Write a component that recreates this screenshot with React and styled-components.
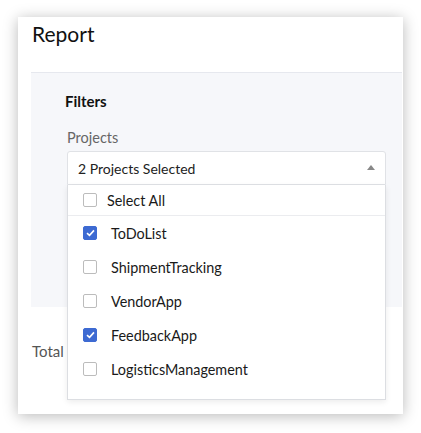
import React from "react";
import styled, { createGlobalStyle } from "styled-components";

const GlobalStyle = createGlobalStyle`
  body {
    margin: 0;
    background: #ffffff;
    font-family: "Lato", "Liberation Sans", sans-serif;
  }
`;

const Page = styled.div`
  padding: 17px 0 0 18px;
  width: 421px;
  height: 433px;
  box-sizing: border-box;
`;

const Card = styled.div`
  width: 385px;
  height: 397px;
  background: #fff;
  box-shadow: 0 2px 14px rgba(0, 0, 0, 0.28);
  padding: 4px 0 0 13px;
  box-sizing: border-box;
  display: flex;
  flex-direction: column;
`;

const Title = styled.h1`
  margin: 0;
  font-size: 21px;
  font-weight: 400;
  color: #111;
  line-height: 26px;
  padding-left: 1px;
`;

const Panel = styled.div`
  margin-top: 25px;
  margin-right: 1px;
  height: 235px;
  box-sizing: border-box;
  background: #f6f7fa;
  border-top: 1px solid #e6e8ee;
  padding: 18px 16px 0 34px;
`;

const PanelTitle = styled.div`
  font-size: 15px;
  font-weight: 700;
  color: #111;
  line-height: 20px;
`;

const Label = styled.div`
  margin-top: 17px;
  padding-left: 2px;
  font-size: 14.5px;
  color: #666;
  line-height: 20px;
`;

const Field = styled.div`
  position: relative;
  margin-top: 3px;
  margin-left: 2px;
  width: 319px;
`;

const SelectBox = styled.div`
  height: 34px;
  box-sizing: border-box;
  border: 1px solid #e0e2e6;
  border-radius: 3px 3px 0 0;
  background: #fff;
  display: flex;
  align-items: center;
  justify-content: space-between;
  padding: 0 10px 0 10px;
  font-size: 14px;
  color: #222;
`;

const Caret = styled.span`
  width: 0;
  height: 0;
  border-left: 4px solid transparent;
  border-right: 4px solid transparent;
  border-bottom: 5px solid #888;
  margin-top: -2px;
`;

const Menu = styled.div`
  position: absolute;
  top: 34px;
  left: 0;
  right: 0;
  background: #fff;
  border: 1px solid #dcdee2;
  border-top: none;
  box-shadow: 0 2px 6px rgba(0, 0, 0, 0.08);
  padding-bottom: 13px;
`;

const Row = styled.label`
  display: flex;
  align-items: center;
  height: ${({ head }) => (head ? "30px" : "34px")};
  padding-left: 15px;
  gap: ${({ head }) => (head ? "10px" : "14px")};
  font-size: 14.4px;
  color: #1a1a1a;
  border-bottom: ${({ head }) => (head ? "1px solid #ebecef" : "none")};
`;

const Box = styled.span`
  width: 14px;
  height: 14px;
  box-sizing: border-box;
  border-radius: 2px;
  border: 1px solid ${({ checked }) => (checked ? "#3d6ad2" : "#bcbcbc")};
  background: ${({ checked }) => (checked ? "#3d6ad2" : "#fff")};
  display: flex;
  align-items: center;
  justify-content: center;
  flex: none;
`;

const Footer = styled.div`
  margin-top: 35px;
  padding-left: 1px;
  font-size: 15px;
  color: #555;
`;

const Check = () => (
  <svg width="9" height="8" viewBox="0 0 9 8">
    <path d="M1 4.2 L3.5 6.4 L8 1.4" fill="none" stroke="#fff" strokeWidth="1.6" />
  </svg>
);

const projects = [
  { name: "ToDoList", checked: true },
  { name: "ShipmentTracking", checked: false },
  { name: "VendorApp", checked: false },
  { name: "FeedbackApp", checked: true },
  { name: "LogisticsManagement", checked: false },
];

export default function App() {
  return (
    <>
      <GlobalStyle />
      <Page>
        <Card>
          <Title>Report</Title>
          <Panel>
            <PanelTitle>Filters</PanelTitle>
            <Label>Projects</Label>
            <Field>
              <SelectBox>
                <span>2 Projects Selected</span>
                <Caret />
              </SelectBox>
              <Menu>
                <Row head>
                  <Box />
                  Select All
                </Row>
                {projects.map((p) => (
                  <Row key={p.name}>
                    <Box checked={p.checked}>{p.checked && <Check />}</Box>
                    {p.name}
                  </Row>
                ))}
              </Menu>
            </Field>
          </Panel>
          <Footer>Total</Footer>
        </Card>
      </Page>
    </>
  );
}
